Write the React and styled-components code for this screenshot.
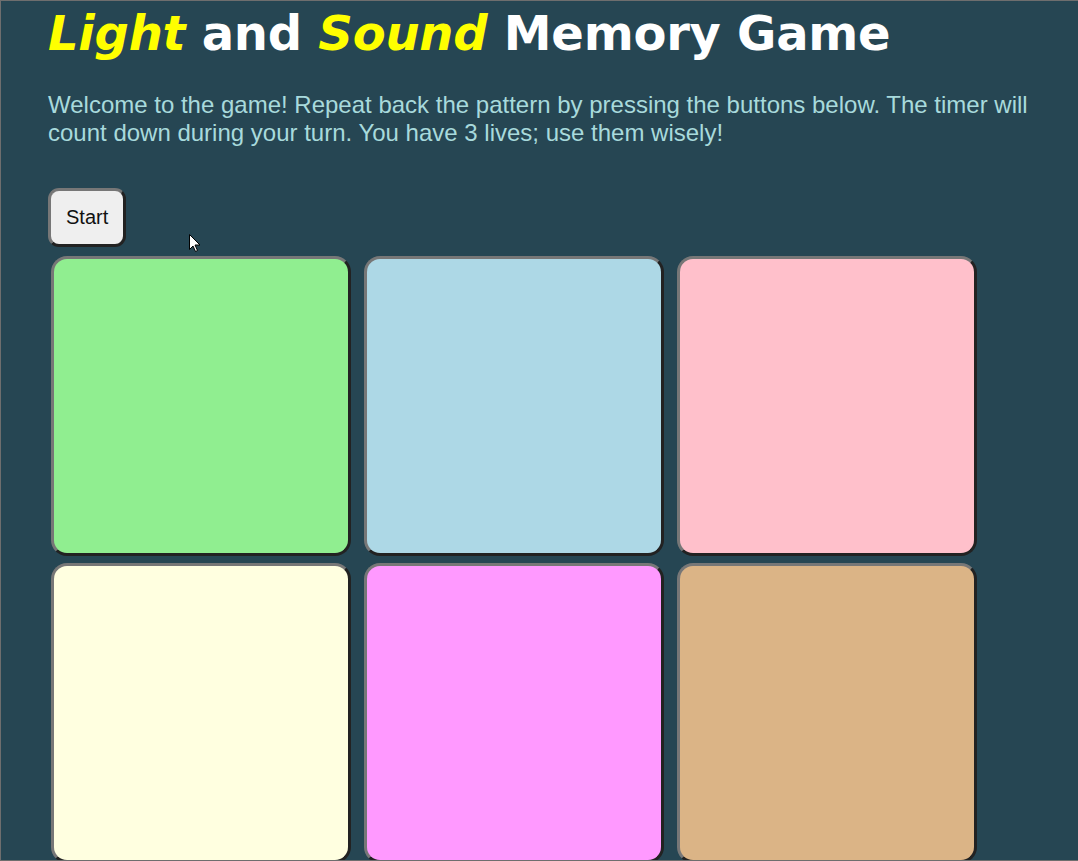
import React from "react";
import styled, { createGlobalStyle } from "styled-components";

const Global = createGlobalStyle`
  html, body { margin: 0; padding: 0; background: #264653; }
  body { overflow: hidden; }
`;

const Frame = styled.div`
  position: relative;
  box-sizing: border-box;
  width: 1078px;
  height: 861px;
  overflow: hidden;
  background: #264653;
  border-top: 1px solid #6e6e6e;
  border-left: 1px solid #6e6e6e;
  border-bottom: 1px solid #6e6e6e;
  padding: 4px 40px 0 47px;
`;

const Title = styled.h1`
  margin: 0;
  font-family: "DejaVu Sans", Verdana, sans-serif;
  font-weight: bold;
  font-size: 48px;
  line-height: normal;
  letter-spacing: -0.25px;
  color: #ffffff;
  white-space: nowrap;
`;

const Accent = styled.em`
  color: #ffff00;
  font-style: italic;
`;

const Intro = styled.p`
  margin: 30px 0 0;
  font-family: "Liberation Sans", Arial, sans-serif;
  font-size: 24px;
  line-height: normal;
  color: #a8dadc;
`;

const StartButton = styled.button`
  display: block;
  margin-top: 41px;
  box-sizing: border-box;
  height: 59px;
  padding: 0 15px;
  font-family: "Liberation Sans", Arial, sans-serif;
  font-size: 20px;
  color: #111;
  background: #efefef;
  border: 3px solid;
  border-color: #777 #222 #222 #777;
  border-radius: 11px;
  cursor: pointer;
`;

const Board = styled.div`
  display: grid;
  grid-template-columns: repeat(3, 300px);
  grid-auto-rows: 300px;
  column-gap: 13px;
  row-gap: 7px;
  margin: 9px 0 0 3px;
`;

const Pad = styled.button`
  box-sizing: border-box;
  width: 300px;
  height: 300px;
  padding: 0;
  background: ${(p) => p.$color};
  border: 3px solid;
  border-color: #777 #222 #222 #777;
  border-radius: 16px;
  cursor: pointer;
`;

const Pointer = styled.svg`
  position: absolute;
  left: 188px;
  top: 233px;
  width: 13px;
  height: 19px;
  pointer-events: none;
`;

const colors = ["#90ee90", "#add8e6", "#ffc0cb", "#ffffe0", "#ff99ff", "#dbb486"];

export default function App() {
  return (
    <>
      <Global />
      <Frame>
        <Title>
          <Accent>Light</Accent> and <Accent>Sound</Accent> Memory Game
        </Title>
        <Intro>
          Welcome to the game! Repeat back the pattern by pressing the buttons below. The timer will
          count down during your turn. You have 3 lives; use them wisely!
        </Intro>
        <StartButton>Start</StartButton>
        <Board>
          {colors.map((c, i) => (
            <Pad key={i} $color={c} aria-label={`pad ${i + 1}`} />
          ))}
        </Board>
        <Pointer viewBox="0 0 13 19">
          <path
            d="M0.5 0.5 L0.5 15.5 L4 12 L6.5 17.5 L8.5 16.5 L6 11 L11 11 Z"
            fill="#fff"
            stroke="#000"
            strokeWidth="1"
            strokeLinejoin="miter"
          />
        </Pointer>
      </Frame>
    </>
  );
}
